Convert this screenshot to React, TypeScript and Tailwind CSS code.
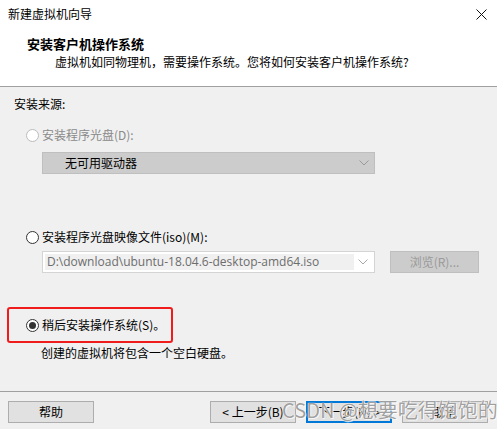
import React from 'react';

const font = { fontFamily: '"Microsoft YaHei UI", "Noto Sans CJK SC", sans-serif' };

function Radio({ checked = false, disabled = false }: { checked?: boolean; disabled?: boolean }) {
  return (
    <span
      className={`flex h-[13px] w-[13px] shrink-0 items-center justify-center rounded-full border bg-white ${
        disabled ? 'border-[#bcbcbc]' : 'border-[#333333]'
      }`}
    >
      {checked && <span className="h-[7px] w-[7px] rounded-full bg-[#333333]" />}
    </span>
  );
}

function Chevron({ color }: { color: string }) {
  return (
    <svg width="10" height="6" viewBox="0 0 10 6" fill="none">
      <path d="M0.5 0.5 L5 5 L9.5 0.5" stroke={color} strokeWidth="1" />
    </svg>
  );
}

function Button({ label, primary = false }: { label: string; primary?: boolean }) {
  return (
    <button
      className={`flex h-[22px] w-[86px] items-center justify-center bg-[#e1e1e1] text-[12px] text-black ${
        primary ? 'border-2 border-[#0078d7]' : 'border border-[#adadad]'
      }`}
    >
      {label}
    </button>
  );
}

export default function App() {
  return (
    <div
      className="relative flex h-[429px] w-[497px] flex-col overflow-hidden bg-[#f0f0f0] text-[12px] leading-4 text-black"
      style={font}
    >
      {/* 標題 + ヘッダー */}
      <div className="flex h-[87px] flex-col border-b border-[#a0a0a0] bg-white">
        <div className="flex items-center justify-between pl-[8px] pr-[10px] pt-[6px]">
          <span>新建虚拟机向导</span>
          <svg width="11" height="11" viewBox="0 0 11 11" className="mt-[1px]">
            <path d="M0.5 0.5 L10.5 10.5 M10.5 0.5 L0.5 10.5" stroke="#111" strokeWidth="1" />
          </svg>
        </div>
        <div className="mt-[14px] pl-[27px] text-[13px] font-bold leading-4">安装客户机操作系统</div>
        <div className="mt-[2px] pl-[55px]">虚拟机如同物理机，需要操作系统。您将如何安装客户机操作系统?</div>
      </div>

      {/* 本体 */}
      <div className="flex flex-1 flex-col pl-[14px] pt-[9px]">
        <div>安装来源:</div>

        <div className="mt-[15px] flex items-center gap-[3px] pl-[12px] text-[#8a8a8a]">
          <Radio disabled />
          <span>安装程序光盘(D):</span>
        </div>
        <div className="ml-[28px] mt-[9px] flex h-[22px] w-[333px] items-center justify-between border border-[#bfbfbf] bg-[#cccccc] pl-[22px] pr-[5px]">
          <span>无可用驱动器</span>
          <Chevron color="#9a9a9a" />
        </div>

        <div className="mt-[55px] flex items-center gap-[3px] pl-[12px]">
          <Radio />
          <span>安装程序光盘映像文件(iso)(M):</span>
        </div>
        <div className="mt-[6px] flex items-center">
          <div className="ml-[28px] flex h-[22px] w-[333px] items-center border border-[#d4d4d4] bg-white p-[2px]">
            <div
              className="flex h-full flex-1 items-center bg-[#f0f0f0] pl-[2px] text-[#6d6d6d]"
              style={{ fontFamily: '"Segoe UI", "Open Sans", "Noto Sans", sans-serif' }}
            >
              D:\download\ubuntu-18.04.6-desktop-amd64.iso
            </div>
            <div className="flex w-[18px] justify-center">
              <Chevron color="#a8a8a8" />
            </div>
          </div>
          <div className="ml-[15px] flex h-[22px] w-[89px] items-center justify-center border border-[#bfbfbf] bg-[#cccccc] text-[#9a9a9a]">
            浏览(R)...
          </div>
        </div>

        <div className="-ml-[7px] mt-[34px] flex h-[36px] w-[166px] items-center gap-[3px] rounded-[3px] border-2 border-[#f01c1c] pl-[17px]">
          <Radio checked />
          <span>稍后安装操作系统(S)。</span>
        </div>
        <div className="ml-[27px] mt-[2px]">创建的虚拟机将包含一个空白硬盘。</div>
      </div>

      {/* フッター */}
      <div className="flex h-[38px] items-start border-t border-[#a0a0a0] px-[8px] pt-[9px]">
        <Button label="帮助" />
        <div className="ml-auto flex gap-[10px] pr-[1px]">
          <Button label="< 上一步(B)" />
          <Button label="下一步(N) >" primary />
          <Button label="取消" />
        </div>
      </div>

      {/* 透かし */}
      <div className="pointer-events-none absolute left-[282px] top-[398px] whitespace-nowrap text-[20px] leading-6 text-[rgba(95,95,95,0.6)] [text-shadow:0_0_1px_#fff,0_0_1px_#fff,1px_1px_0_rgba(255,255,255,0.7)]">
        CSDN @想要吃得饱饱的
      </div>
    </div>
  );
}
